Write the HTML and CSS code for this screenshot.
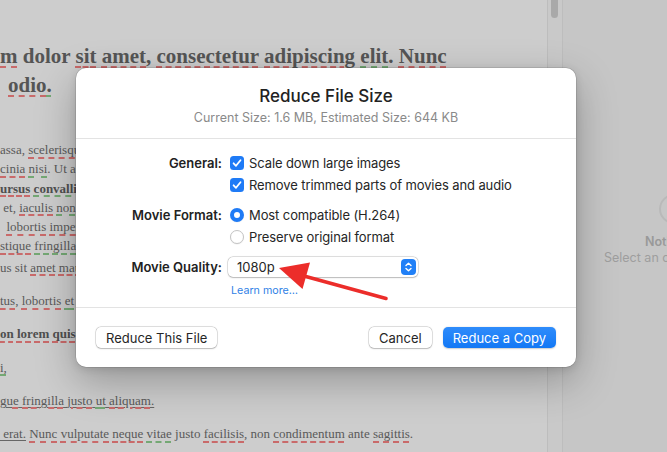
FILE: index.html
```html
<!DOCTYPE html>
<html lang="en">
<head>
    <meta charset="UTF-8">
    <meta name="viewport" content="width=device-width, initial-scale=1.0">
    <title>Reduce File Size</title>
    <link rel="stylesheet" href="styles.css">
</head>
<body>
    <div class="app">
        <main class="doc">
            <div class="heading">
                <div><span class="sp">m</span> dolor <span class="sp">sit</span> <span class="sp">amet</span>, <span class="sp">consectetur</span> <span class="sp">adipiscing</span> <span class="gr">elit</span>. <span class="sp">Nunc</span></div>
                <div class="indent"><span class="sp">odio</span><span class="gr">.</span></div>
            </div>
            <div class="para">
                <div class="line">assa, <span class="sp">scelerisque</span></div>
                <div class="line"><span class="sp">cinia</span> <span class="gr">nisi</span>. Ut ac</div>
                <div class="line bold"><span class="sp">ursus</span> <span class="gr">convallis</span></div>
                <div class="line">&nbsp;et, <span class="sp">iaculis</span> <span class="gr">non</span></div>
                <div class="line">&nbsp;&nbsp;<span class="sp">lobortis</span> <span class="sp">imperd</span></div>
                <div class="line"><span class="sp">stique</span> <span class="gr">fringilla</span></div>
                <div class="line tall">us sit <span class="sp">amet</span> <span class="sp">mau</span></div>
            </div>
            <div class="para"><div class="line"><span class="sp">tus</span>, <span class="sp">lobortis</span> <span class="gr">et</span></div></div>
            <div class="para"><div class="line bold"><span class="sp">on</span> <span class="sp">lorem</span> <span class="sp">quis</span></div></div>
            <div class="para"><div class="line"><span class="gr">i,</span></div></div>
            <div class="para"><div class="line"><span class="link"><span class="sp">gue</span> <span class="sp">fringilla</span> <span class="sp">justo</span> <span class="gr">ut</span> <span class="sp">aliquam</span>.</span></div></div>
            <div class="para"><div class="line"><span class="link">&nbsp;erat.</span> <span class="sp">Nunc</span> <span class="sp">vulputate</span> <span class="sp">neque</span> <span class="gr">vitae</span> justo <span class="sp">facilisis</span>, non <span class="sp">condimentum</span> ante <span class="sp">sagittis</span>.</div></div>
        </main>
        <div class="scroll"><div class="thumb"></div></div>
        <aside class="sidebar">
            <div class="empty-icon"></div>
            <div class="empty-title">Nothing Selected</div>
            <div class="empty-text">Select an object to format</div>
        </aside>
    </div>

    <div class="dialog">
        <div class="dialog-head">
            <div class="title">Reduce File Size</div>
            <div class="subtitle">Current Size: 1.6 MB, Estimated Size: 644 KB</div>
        </div>
        <div class="form">
            <div class="row">
                <div class="label">General:</div>
                <div class="check"><svg width="14" height="14" viewBox="0 0 14 14"><path d="M3.6 7.3 L6 9.8 L10.5 4.2" fill="none" stroke="#fff" stroke-width="1.8" stroke-linecap="round" stroke-linejoin="round"/></svg></div>
                <span class="opt">Scale down large images</span>
            </div>
            <div class="row">
                <div class="label"></div>
                <div class="check"><svg width="14" height="14" viewBox="0 0 14 14"><path d="M3.6 7.3 L6 9.8 L10.5 4.2" fill="none" stroke="#fff" stroke-width="1.8" stroke-linecap="round" stroke-linejoin="round"/></svg></div>
                <span class="opt">Remove trimmed parts of movies and audio</span>
            </div>
            <div class="row spaced">
                <div class="label">Movie Format:</div>
                <div class="radio on"></div>
                <span class="opt">Most compatible (H.264)</span>
            </div>
            <div class="row">
                <div class="label"></div>
                <div class="radio"></div>
                <span class="opt">Preserve original format</span>
            </div>
            <div class="row spaced">
                <div class="label">Movie Quality:</div>
                <div class="popup">
                    <span>1080p</span>
                    <div class="stepper"><svg width="15" height="16" viewBox="0 0 15 16"><path d="M5 6.6 L7.5 4.2 L10 6.6 M5 9.4 L7.5 11.8 L10 9.4" fill="none" stroke="#fff" stroke-width="1.4" stroke-linecap="round" stroke-linejoin="round"/></svg></div>
                </div>
            </div>
            <div class="row learn">
                <div class="label"></div>
                <a class="more">Learn more…</a>
            </div>
        </div>
        <div class="dialog-foot">
            <button class="btn">Reduce This File</button>
            <div class="spacer"></div>
            <button class="btn">Cancel</button>
            <button class="btn primary">Reduce a Copy</button>
        </div>
    </div>

    <svg class="arrow" width="667" height="452" viewBox="0 0 667 452">
        <path d="M304 276 L386 298.5" stroke="#ec2d2a" stroke-width="3.6" stroke-linecap="round"/>
        <polygon points="279,268 310,262.5 302.5,289" fill="#ec2d2a"/>
    </svg>
</body>
</html>
```

FILE: styles.css
```css
* {
    box-sizing: border-box;
}
body {
    margin: 0;
    width: 667px;
    height: 452px;
    overflow: hidden;
    font-family: Inter, "Liberation Sans", sans-serif;
}
.app {
    display: flex;
    height: 452px;
}
.doc {
    width: 547px;
    overflow: hidden;
    background: #cdcdcd;
    padding-top: 42px;
    font-family: "Liberation Serif", serif;
    color: #595959;
    white-space: nowrap;
}
.heading {
    font-size: 21px;
    font-weight: bold;
    line-height: 29px;
    color: #555;
}
.indent {
    padding-left: 8px;
}
.para {
    margin-top: 14px;
    font-size: 13px;
}
.heading + .para {
    margin-top: 40px;
}
.line {
    line-height: 19.3px;
}
.line.tall {
    margin-top: 2px;
}
.bold {
    font-weight: bold;
    color: #4f4f4f;
}
.sp, .gr {
    text-decoration: underline dashed #c96a6a;
    text-decoration-thickness: 2px;
    text-underline-offset: 3px;
}
.gr {
    text-decoration-color: #74a874;
}
.link {
    text-decoration: underline #666;
    text-underline-offset: 2px;
}
.link .sp, .link .gr {
    text-underline-offset: 3px;
}
.scroll {
    width: 16px;
    background: #c9c9c9;
    border-left: 1px solid #bdbdbd;
    border-right: 1px solid #bdbdbd;
    padding-left: 3px;
}
.thumb {
    width: 7px;
    height: 18px;
    border-radius: 0 0 4px 4px;
    background: #a9a9a9;
}
.sidebar {
    flex: 1;
    background: #c6c6c6;
    overflow: hidden;
    white-space: nowrap;
    font-size: 12.5px;
    padding-top: 194px;
}
.empty-icon {
    width: 30px;
    height: 30px;
    margin-left: 96px;
    border: 2px solid #b9b9b9;
    border-radius: 50%;
}
.empty-title {
    margin: 10px 0 0 82px;
    font-weight: 600;
    color: #999;
    line-height: 16px;
}
.empty-text {
    margin-left: 41px;
    color: #9e9e9e;
    line-height: 16px;
}

.dialog {
    position: absolute;
    left: 76px;
    top: 68px;
    width: 500px;
    height: 299px;
    background: #fff;
    border-radius: 10px;
    box-shadow: 0 0 0 0.5px rgba(0, 0, 0, 0.18), 0 14px 40px rgba(0, 0, 0, 0.28), 0 2px 8px rgba(0, 0, 0, 0.12);
    color: #262626;
    font-size: 13px;
}
.dialog-head {
    padding-top: 18px;
    height: 71px;
    border-bottom: 1px solid #e3e3e3;
    text-align: center;
}
.title {
    font-size: 17px;
    line-height: 20px;
    font-weight: 500;
    color: #222;
}
.subtitle {
    margin-top: 4px;
    font-size: 12.5px;
    line-height: 16px;
    color: #8a8a8a;
}
.form {
    padding-top: 13px;
    height: 169px;
    border-bottom: 1px solid #e3e3e3;
}
.row {
    display: flex;
    align-items: center;
    height: 22px;
}
.row.spaced {
    margin-top: 8px;
}
.row.learn {
    height: 14px;
    margin-top: 6px;
}
.label {
    width: 146px;
    margin-right: 8px;
    text-align: right;
    font-weight: 600;
    color: #222;
}
.check {
    width: 14px;
    height: 14px;
    border-radius: 3.5px;
    background: #1f7bf6;
    margin-right: 5px;
}
.check svg {
    display: block;
}
.radio {
    width: 14px;
    height: 14px;
    border-radius: 50%;
    border: 1px solid #c4c4c4;
    background: #fff;
    margin-right: 5px;
    box-shadow: 0 0.5px 1px rgba(0, 0, 0, 0.08);
}
.radio.on {
    border: 4.5px solid #1f7bf6;
}
.opt {
    line-height: 22px;
    letter-spacing: -0.1px;
}
.popup {
    display: flex;
    align-items: center;
    justify-content: space-between;
    width: 190px;
    height: 20px;
    margin-left: -2px;
    padding: 0 2px 0 9px;
    border-radius: 5px;
    background: #fff;
    box-shadow: 0 0 0 0.5px rgba(0, 0, 0, 0.2), 0 0.5px 1.5px rgba(0, 0, 0, 0.2);
}
.stepper {
    width: 15px;
    height: 16px;
    border-radius: 4px;
    background: #2180f7;
}
.stepper svg {
    display: block;
}
.more {
    margin-left: 1px;
    font-size: 10.7px;
    line-height: 14px;
    color: #2f7fe6;
}
.dialog-foot {
    display: flex;
    align-items: center;
    padding: 19px 20px;
}
.spacer {
    flex: 1;
}
.btn {
    height: 21px;
    padding: 0 10px;
    margin-left: 11px;
    border: none;
    border-radius: 5px;
    background: #fff;
    font-family: Inter, "Liberation Sans", sans-serif;
    font-size: 13px;
    color: #262626;
    box-shadow: 0 0 0 0.5px rgba(0, 0, 0, 0.2), 0 0.5px 1.5px rgba(0, 0, 0, 0.2);
}
.btn:first-child {
    margin-left: 0;
}
.btn.primary {
    background: linear-gradient(#2f8cfb, #1378f5);
    color: #fff;
    box-shadow: 0 0.5px 1.5px rgba(0, 0, 0, 0.2);
}
.arrow {
    position: absolute;
    left: 0;
    top: 0;
    pointer-events: none;
}
```
